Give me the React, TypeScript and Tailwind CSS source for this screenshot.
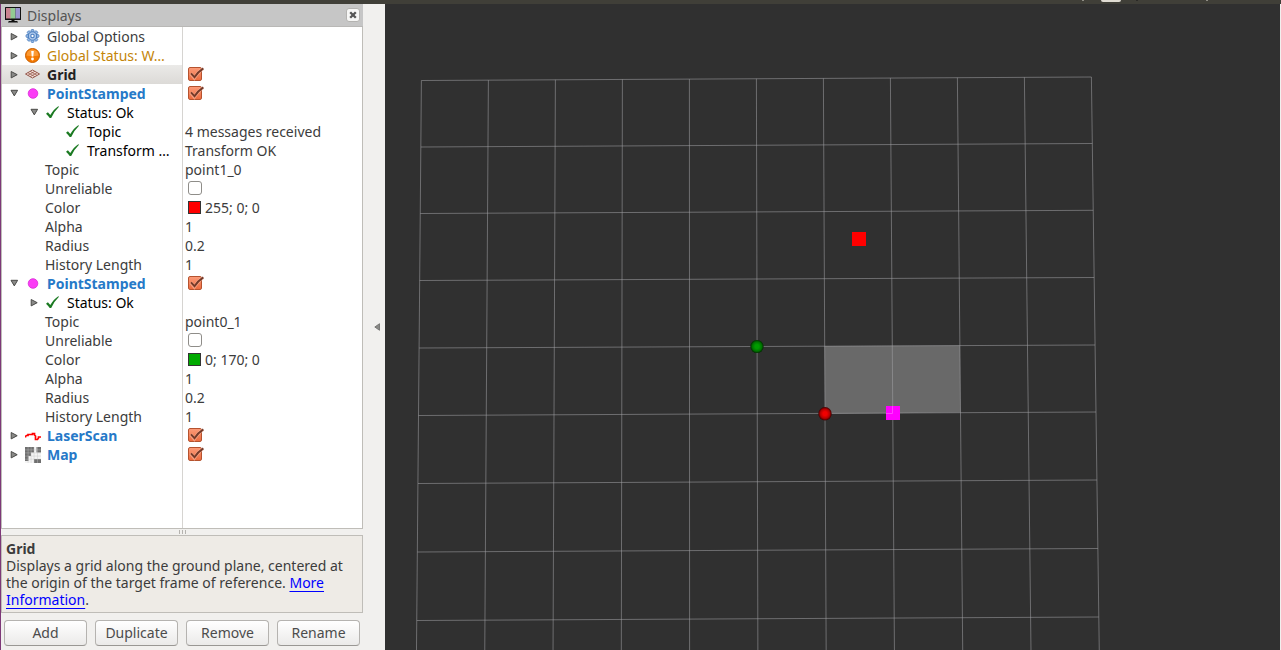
import { useState, type ReactNode } from "react";

type IconName = "gear" | "warning" | "grid" | "point" | "check" | "laser" | "map";

type Row = {
  id: string;
  depth: 0 | 1 | 2;
  name: string;
  icon?: IconName;
  tone?: "display" | "selected" | "warning" | "status";
  expandable?: boolean;
  value?: string;
  checked?: boolean;
  swatch?: string;
};

const rows: Row[] = [
  { id: "options", depth: 0, name: "Global Options", icon: "gear", expandable: true },
  { id: "status", depth: 0, name: "Global Status: W…", icon: "warning", tone: "warning", expandable: true },
  { id: "grid", depth: 0, name: "Grid", icon: "grid", tone: "selected", expandable: true, checked: true },
  { id: "p1", depth: 0, name: "PointStamped", icon: "point", tone: "display", expandable: true, checked: true },
  { id: "p1-status", depth: 1, name: "Status: Ok", icon: "check", tone: "status", expandable: true },
  { id: "p1-status-topic", depth: 2, name: "Topic", icon: "check", tone: "status", value: "4 messages received" },
  { id: "p1-status-tf", depth: 2, name: "Transform …", icon: "check", tone: "status", value: "Transform OK" },
  { id: "p1-topic", depth: 1, name: "Topic", value: "point1_0" },
  { id: "p1-unreliable", depth: 1, name: "Unreliable", checked: false },
  { id: "p1-color", depth: 1, name: "Color", value: "255; 0; 0", swatch: "bg-[#ff0000]" },
  { id: "p1-alpha", depth: 1, name: "Alpha", value: "1" },
  { id: "p1-radius", depth: 1, name: "Radius", value: "0.2" },
  { id: "p1-history", depth: 1, name: "History Length", value: "1" },
  { id: "p2", depth: 0, name: "PointStamped", icon: "point", tone: "display", expandable: true, checked: true },
  { id: "p2-status", depth: 1, name: "Status: Ok", icon: "check", tone: "status", expandable: true },
  { id: "p2-topic", depth: 1, name: "Topic", value: "point0_1" },
  { id: "p2-unreliable", depth: 1, name: "Unreliable", checked: false },
  { id: "p2-color", depth: 1, name: "Color", value: "0; 170; 0", swatch: "bg-[#00aa00]" },
  { id: "p2-alpha", depth: 1, name: "Alpha", value: "1" },
  { id: "p2-radius", depth: 1, name: "Radius", value: "0.2" },
  { id: "p2-history", depth: 1, name: "History Length", value: "1" },
  { id: "laser", depth: 0, name: "LaserScan", icon: "laser", tone: "display", expandable: true, checked: true },
  { id: "map", depth: 0, name: "Map", icon: "map", tone: "display", expandable: true, checked: true },
];

const indent = { 0: "pl-0", 1: "pl-5", 2: "pl-10" };

const toneClass = {
  display: "font-bold text-[#2679c8]",
  selected: "font-bold text-[#222222]",
  warning: "text-[#c48509]",
  status: "text-black",
};

const teeth = [0, 45, 90, 135, 180, 225, 270, 315];

function RowIcon({ name }: { name: IconName }) {
  const drawings: Record<IconName, ReactNode> = {
    gear: (
      <g transform="translate(7.5 7)">
        {teeth.map((a) => (
          <rect key={a} x="-1.4" y="-6.4" width="2.8" height="3" rx="0.8" fill="#9fbfe6" stroke="#4c7fc0" strokeWidth="0.9" transform={`rotate(${a})`} />
        ))}
        <circle r="4.2" fill="#a9c6ea" stroke="#4c7fc0" strokeWidth="1.1" />
        <circle r="1.7" fill="#ffffff" stroke="#4c7fc0" strokeWidth="1.1" />
      </g>
    ),
    warning: (
      <>
        <circle cx="7.5" cy="7.5" r="7" fill="#f57900" stroke="#c75f00" />
        <path d="M1.5 7.5a6 6 0 0 1 12 0c-4 1-8 1-12 0Z" fill="#fb9a35" />
        <path d="M6.2 3h2.600l-.5 5.600H6.700Z" fill="#fff" />
        <circle cx="7.5" cy="11" r="1.4" fill="#fff" />
      </>
    ),
    grid: (
      <g fill="none" stroke="#8c4a3c" strokeWidth="0.9">
        <path d="M7.5 3 14.5 7 7.5 11 .5 7Z" fill="#f3e2dc" />
        <path d="M9.83 4.33 2.83 8.33M12.17 5.67 5.17 9.67M5.17 4.33 12.17 8.33M2.83 5.67 9.83 9.67" strokeWidth="0.7" />
      </g>
    ),
    point: <circle cx="8" cy="7.5" r="4.8" fill="#fb3cf6" stroke="#d82ad6" strokeWidth="0.8" />,
    check: <path d="M1 8.700 2.900 7.200 5.300 10.100Q8.600 4.100 13.300 1.200L14 1.800Q9.100 6.500 6.200 12.900L4.700 13.100Q3 10.500 1 8.700Z" fill="#1b7a22" />,
    laser: <path d="M.5 9.500V8.500L1.500 7.500H3V6.500H7.500V5.500H9.500V7L10.500 8v3.500H12.500L13.500 10V9H16" fill="none" stroke="#ff0000" strokeWidth="1.700" />,
    map: (
      <>
        <rect width="16" height="16" fill="#f4f4f4" />
        <path d="M0 0h9v5.500H6v3.500H3.500V14H0ZM11.500 0H16v5.500h-4.500ZM9 12h7v4H9Z" fill="#6f6f6f" />
        <path d="M3.100 0v16M6.100 0v16M9.100 0v16M12.500 0v16M0 2.900h16M0 5.900h16M0 9.100h16M0 12.200h16" stroke="#c4c4c4" strokeWidth="0.4" />
      </>
    ),
  };
  return (
    <svg viewBox="0 0 16 16" className="mr-[6px] size-4 shrink-0" aria-hidden="true">
      {drawings[name]}
    </svg>
  );
}

function Arrow({ open }: { open: boolean }) {
  return (
    <svg viewBox="0 0 10 10" className="size-[10px]" aria-hidden="true">
      <path d={open ? "M2 1.300h6.600L5.300 6.900Z" : "M2.200 1.500v6.400L8.200 4.700Z"} fill="#8a8a88" stroke="#4a4a48" strokeWidth="1" />
    </svg>
  );
}

function CheckBox({ id, checked }: { id: string; checked: boolean }) {
  return (
    <span className="relative mb-px ml-[3px] block size-[14px]">
      <input
        id={id}
        type="checkbox"
        defaultChecked={checked}
        className="peer block size-[14px] appearance-none rounded-[3px] border border-[#8f8d89] bg-white checked:rounded-[2px] checked:border-[#b5532f] checked:bg-linear-to-b checked:from-[#fb9a77] checked:to-[#ed6c3f]"
      />
      <svg viewBox="0 0 17 15" className="pointer-events-none absolute top-0 left-0 hidden h-[15px] w-[17px] peer-checked:block" aria-hidden="true">
        <path d="M2.800 6.400 6.300 11Q9.800 5 15 1.600" fill="none" stroke="#fbc3ad" strokeWidth="3.400" opacity="0.55" />
        <path d="M3 6.400 6.500 10.200Q9.800 5 15.400 1.400" fill="none" stroke="#743a29" strokeWidth="1.900" />
      </svg>
    </span>
  );
}

function DisplayTree() {
  const [open, setOpen] = useState<Record<string, boolean>>({ p1: true, "p1-status": true, p2: true });
  let closedDepth = 99;
  const visible = rows.filter((row) => {
    if (row.depth > closedDepth) return false;
    closedDepth = row.expandable && !open[row.id] ? row.depth : 99;
    return true;
  });

  return (
    <div className="flex flex-1 flex-col border-x border-b border-[#bfbdb8] bg-white">
      <table className="w-full table-fixed border-separate border-spacing-0">
        <tbody>
          {visible.map((row) => {
            const selected = row.tone === "selected";
            return (
              <tr key={row.id} className="h-[19px]">
                <th
                  scope="row"
                  className={`w-[181px] border-r border-[#d6d4d1] p-0 text-left font-normal ${selected ? "bg-linear-to-b from-[#ebeae8] to-[#dcdad7]" : ""}`}
                >
                  <div className={`flex h-[19px] items-center whitespace-nowrap ${indent[row.depth]}`}>
                    <span className="flex w-[23px] shrink-0 justify-center">
                      {row.expandable && (
                        <button
                          type="button"
                          aria-label={`Toggle ${row.name}`}
                          aria-expanded={!!open[row.id]}
                          onClick={() => setOpen({ ...open, [row.id]: !open[row.id] })}
                        >
                          <Arrow open={!!open[row.id]} />
                        </button>
                      )}
                    </span>
                    {row.icon && <RowIcon name={row.icon} />}
                    {row.checked === undefined ? (
                      <span className={row.tone ? toneClass[row.tone] : ""}>{row.name}</span>
                    ) : (
                      <label htmlFor={row.id} className={row.tone ? toneClass[row.tone] : ""}>
                        {row.name}
                      </label>
                    )}
                  </div>
                </th>
                <td className="p-0 pl-[2px]">
                  {row.checked !== undefined && <CheckBox id={row.id} checked={row.checked} />}
                  {row.value && (
                    <span className="flex items-center">
                      {row.swatch && <span className={`mr-1 ml-[3px] size-[13px] border border-[#333333] ${row.swatch}`} />}
                      {row.value}
                    </span>
                  )}
                </td>
              </tr>
            );
          })}
        </tbody>
      </table>
      <div className="w-[181px] flex-1 border-r border-[#d6d4d1]" />
    </div>
  );
}

function DisplaysPanel() {
  return (
    <section className="flex w-[362px] shrink-0 flex-col">
      <header className="flex h-[23px] items-center border-b border-[#b9b8b6] bg-[#c6c6c6] pr-[3px] pl-1">
        <svg viewBox="0 0 16 16" className="mr-[6px] size-4" aria-hidden="true">
          <rect x="0" y="0" width="16" height="13" rx="0.5" fill="#111" />
          <path d="M1 1h5v10.500H1z" fill="#c98490" />
          <path d="M5.500 1h5v10.500h-5z" fill="#93cb93" />
          <path d="M10.500 1H15v10.500h-4.500z" fill="#9a95cf" />
          <path d="M6.500 12h3v2h2.500q1 .5 1 1.500H3q0-1 1-1.500h2.500z" fill="#111" />
        </svg>
        <h1 className="flex-1 text-[#555555]">Displays</h1>
        <button type="button" aria-label="Close" className="flex size-[14px] items-center justify-center rounded-[3px] border border-[#b4b3b1] bg-[#f6f6f5]">
          <svg viewBox="0 0 8 8" className="size-2" aria-hidden="true">
            <path d="M1.200 1.200 6.800 6.800M6.800 1.200 1.200 6.800" stroke="#555" strokeWidth="2.300" />
          </svg>
        </button>
      </header>
      <DisplayTree />
      <div className="flex h-[6px] shrink-0 items-center justify-center gap-[2px]">
        <span className="h-1 w-px bg-[#b5b3af]" />
        <span className="h-1 w-px bg-[#b5b3af]" />
        <span className="h-1 w-px bg-[#b5b3af]" />
      </div>
      <div className="border border-[#bfbdb8] bg-[#eeebe6] px-1 py-1 leading-[17px]">
        <h2 className="font-bold">Grid</h2>
        <p>
          Displays a grid along the ground plane, centered at the origin of the target frame of reference.{" "}
          <a href="#more" className="text-[#0000ff] underline underline-offset-3">
            More Information
          </a>
          .
        </p>
      </div>
      <div className="grid grid-cols-4 gap-2 px-[3px] pt-[7px] pb-1">
        {["Add", "Duplicate", "Remove", "Rename"].map((label) => (
          <button
            key={label}
            type="button"
            className="h-[26px] rounded-[4px] border border-[#b5b3b0] border-b-[#999794] bg-linear-to-b from-white to-[#ebeae9] pb-[2px] text-[#4c4c4c]"
          >
            {label}
          </button>
        ))}
      </div>
    </section>
  );
}

const columns = Array.from({ length: 11 }, (_, i) => i);
const levels = [
  [80.5, 77], [147, 143.5], [213.5, 210.3], [280.5, 277.5], [348, 345],
  [415.5, 412], [483.5, 480], [552, 548.5], [620.5, 617],
];

function Scene() {
  return (
    <svg viewBox="385 4 895 646" preserveAspectRatio="xMidYMid slice" className="h-full min-h-0 w-0 min-w-0 flex-1 bg-[#303030]" role="img" aria-label="3D view">
      <defs>
        <radialGradient id="redBall">
          <stop offset="0.3" stopColor="#f00000" />
          <stop offset="0.7" stopColor="#b40000" />
          <stop offset="1" stopColor="#3c0000" />
        </radialGradient>
        <radialGradient id="greenBall">
          <stop offset="0.3" stopColor="#009c00" />
          <stop offset="0.7" stopColor="#007400" />
          <stop offset="1" stopColor="#002a00" />
        </radialGradient>
      </defs>
      <path d="M824.5 346 960 345.500 960.500 412.500 825 414Z" fill="#696969" />
      <g stroke="#a0a0a4" strokeOpacity="0.55" strokeWidth="1">
        {columns.map((i) => (
          <line key={i} x1={421.4 + 67 * i} y1={80.5 - 0.35 * i} x2={416.4 + 68.3 * i} y2={660} />
        ))}
        {levels.map(([left, right]) => (
          <line
            key={left}
            x1={421.4 - (left - 80.5) * 0.0085}
            y1={left}
            x2={1091.4 + (right - 77) * 0.0137}
            y2={right}
          />
        ))}
      </g>
      <rect x="852" y="232" width="14" height="14" fill="#ff0000" />
      <rect x="886" y="406" width="14" height="14" fill="#ff00ff" />
      <path d="M886 413.500h6.500V406" fill="none" stroke="#ff40ff" />
      <circle cx="757" cy="346.500" r="6.600" fill="url(#greenBall)" />
      <circle cx="825" cy="413.700" r="6.700" fill="url(#redBall)" />
    </svg>
  );
}

export default function App() {
  return (
    <div className="flex h-screen min-h-[600px] flex-col bg-[#f1f0ee] font-['Noto_Sans','Open_Sans',sans-serif] text-[14px] leading-[19px] text-[#3c3c3c]">
      <div className="flex h-1 shrink-0 justify-end bg-[#403f38] pr-[73px]">
        <span className="mr-[17px] h-px w-[2px] bg-[#8f8d85]" />
        <span className="mr-[15px] h-[2px] w-5 rounded-b-sm bg-[#dfdbd2]" />
        <span className="mr-[68px] h-px w-[2px] bg-[#2a2926]" />
        <span className="h-px w-[2px] bg-[#8f8d85]" />
      </div>
      <main className="flex min-h-0 flex-1 border-l border-[#7d3878]">
        <DisplaysPanel />
        <button type="button" aria-label="Collapse panel" className="flex w-[22px] shrink-0 items-center justify-center pl-[6px]">
          <svg viewBox="0 0 6 8" className="h-2 w-[6px]" aria-hidden="true">
            <path d="M5.500.7v6.600L.8 4Z" fill="#8a8a88" stroke="#6a6a68" strokeWidth="0.8" />
          </svg>
        </button>
        <Scene />
        <div className="w-px shrink-0 bg-[#f1f0ee]" />
      </main>
    </div>
  );
}
